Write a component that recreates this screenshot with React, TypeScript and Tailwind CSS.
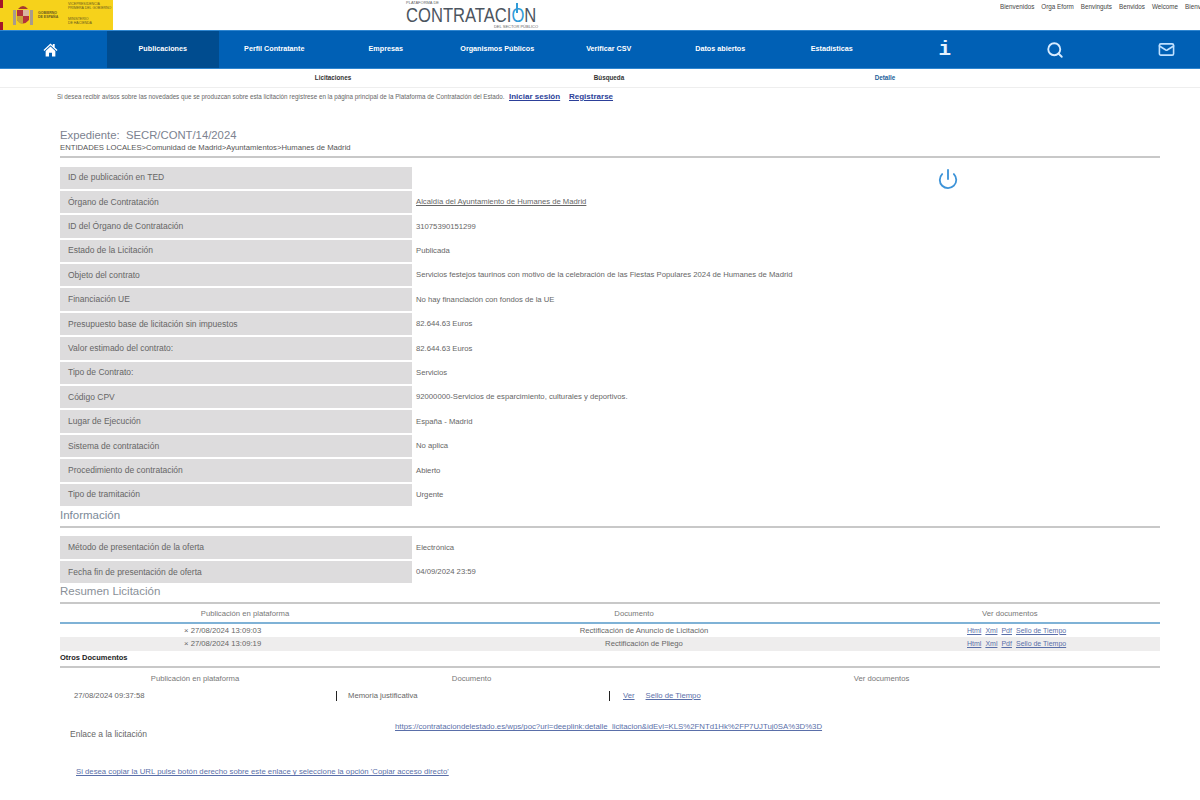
import { Mail, Power, Search } from 'lucide-react';

const font = { fontFamily: '"Liberation Sans", Arial, sans-serif' };

const navItems = ['Publicaciones', 'Perfil Contratante', 'Empresas', 'Organismos Públicos', 'Verificar CSV', 'Datos abiertos', 'Estadísticas'];

const topLinks = ['Bienvenidos', 'Orga Eform', 'Benvinguts', 'Benvidos', 'Welcome', 'Bienvenue'];

const mainRows = [
  ['ID de publicación en TED', ''],
  ['Órgano de Contratación', 'Alcaldía del Ayuntamiento de Humanes de Madrid'],
  ['ID del Órgano de Contratación', '31075390151299'],
  ['Estado de la Licitación', 'Publicada'],
  ['Objeto del contrato', 'Servicios festejos taurinos con motivo de la celebración de las Fiestas Populares 2024 de Humanes de Madrid'],
  ['Financiación UE', 'No hay financiación con fondos de la UE'],
  ['Presupuesto base de licitación sin impuestos', '82.644.63 Euros'],
  ['Valor estimado del contrato:', '82.644.63 Euros'],
  ['Tipo de Contrato:', 'Servicios'],
  ['Código CPV', '92000000-Servicios de esparcimiento, culturales y deportivos.'],
  ['Lugar de Ejecución', 'España - Madrid'],
  ['Sistema de contratación', 'No aplica'],
  ['Procedimiento de contratación', 'Abierto'],
  ['Tipo de tramitación', 'Urgente'],
];

const infoRows = [
  ['Método de presentación de la oferta', 'Electrónica'],
  ['Fecha fin de presentación de oferta', '04/09/2024 23:59'],
];

function DetailRow({ label, value }: { label: string; value: string }) {
  return (
    <div className="flex h-[24.4px] items-stretch">
      <div className="flex w-[352px] items-center border-b-2 border-white bg-[#dddcdd] pl-[8px] text-[8.5px] text-[#666]">{label}</div>
      <div className="flex items-center pb-[2px] pl-[4px] text-[7.7px] text-[#666]">
        {label === 'Órgano de Contratación' ? <span className="underline">{value}</span> : value}
      </div>
    </div>
  );
}

function Logo() {
  return (
    <div className="flex h-[30px] w-[113px] bg-[#f6d21b]">
      <div className="flex w-[3px] flex-col">
        <div className="h-[8px] bg-[#a5142a]" />
        <div className="h-[14px] bg-[#f6d21b]" />
        <div className="h-[8px] bg-[#a5142a]" />
      </div>
      <svg width="22" height="30" viewBox="0 0 22 30" className="ml-[9px]">
        <rect x="1" y="10" width="3" height="15" fill="#a89a8c" />
        <rect x="18" y="10" width="3" height="15" fill="#a89a8c" />
        <path d="M5 10h12v10q-6 7-12 0z" fill="#b4333a" />
        <path d="M11 10h6v6h-6z" fill="#d9b5a0" />
        <path d="M5 16h6v8q-4 0-6-4z" fill="#c9a23a" />
        <path d="M6 9q5-6 10 0z" fill="#a63a30" />
      </svg>
      <div className="ml-[4px] mt-[11px] w-[27px] text-[3.5px] font-bold leading-[4px] text-[#6a5a20]">
        <div>GOBIERNO</div>
        <div>DE ESPAÑA</div>
      </div>
      <div className="ml-[3px] mt-[3px] whitespace-nowrap text-[3.5px] leading-[3.5px] text-[#6a5a20]">
        <div>VICEPRESIDENCIA</div>
        <div>PRIMERA DEL GOBIERNO</div>
        <div className="mt-[8px]">MINISTERIO</div>
        <div>DE HACIENDA</div>
      </div>
    </div>
  );
}

function Brand() {
  return (
    <div className="relative ml-[293px] h-[30px] w-[132px]">
      <div className="absolute left-0 top-0 text-[4px] leading-[5px] text-[#666]">PLATAFORMA DE</div>
      <div className="absolute left-0 top-[3px] origin-left scale-x-[0.83] whitespace-nowrap text-[20px] leading-[24px] text-[#4c5560]">
        CONTRATACI<span className="text-[#2f9bd8]">O</span>N
      </div>
      <div className="absolute left-[110px] top-[3px] h-[10px] w-[1.5px] bg-[#2f9bd8]" />
      <div className="absolute right-0 top-[24px] text-[4px] leading-[5px] text-[#666]">DEL SECTOR PÚBLICO</div>
    </div>
  );
}

function App() {
  return (
    <div style={font} className="min-h-[800px] bg-white">
      <header className="flex h-[30px] bg-white">
        <Logo />
        <Brand />
        <div className="ml-auto flex w-[200px] gap-[7px] overflow-hidden whitespace-nowrap pt-[2px] text-[6.3px] text-[#444]">
          {topLinks.map(link => (
            <span key={link}>{link}</span>
          ))}
        </div>
      </header>

      <nav className="flex h-[39px] items-stretch overflow-hidden border-y border-[#2f86d0] bg-[#0060b5] text-white">
        <div className="flex w-[107px] shrink-0 items-center justify-center pr-[6px]">
          <svg width="15" height="14" viewBox="0 0 16 15" fill="white">
            <path d="M8 0.5 0.5 7.5 1.5 8.5 8 2.5 14.5 8.5 15.5 7.5 12.5 4.7V1h-2v1.9z" />
            <path d="M2.8 8.6 8 3.8l5.2 4.8V14.5H9.6v-4H6.4v4H2.8z" />
          </svg>
        </div>
        {navItems.map((item, index) => (
          <div
            key={item}
            className={`flex w-[111.5px] shrink-0 items-center justify-center text-[7.2px] font-semibold ${index === 0 ? 'bg-[#004c8f]' : ''}`}
          >
            {item}
          </div>
        ))}
        <div className="flex w-[111.5px] shrink-0 items-center justify-center pl-[3px] font-['Liberation_Mono'] text-[21px] font-bold text-[#e6f3ff]">i</div>
        <div className="flex w-[111.5px] shrink-0 items-center justify-center text-[#d6ebff]">
          <Search size={18} strokeWidth={2.5} />
        </div>
        <div className="flex w-[111.5px] shrink-0 items-center justify-center text-[#bfe0ff]">
          <Mail size={17} strokeWidth={2.25} />
        </div>
      </nav>

      <div className="flex h-[19px] items-center border-b border-[#eeeeee] pl-[195px] text-[6.3px] font-semibold text-[#333]">
        <div className="w-[276px] text-center">Licitaciones</div>
        <div className="w-[276px] text-center">Búsqueda</div>
        <div className="w-[276px] text-center text-[#1c5f99]">Detalle</div>
      </div>

      <div className="flex h-[17px] items-center pl-[57px] text-[6.27px] text-[#666]">
        <span className="w-[452px] whitespace-nowrap">Si desea recibir avisos sobre las novedades que se produzcan sobre esta licitación regístrese en la página principal de la Plataforma de Contratación del Estado.</span>
        <a className="w-[60px] text-[8px] font-semibold text-[#2c3f99] underline">Iniciar sesión</a>
        <a className="text-[8px] font-semibold text-[#2c3f99] underline">Registrarse</a>
      </div>

      <main className="pl-[60px] pr-[40px] pt-[23px]">
        <div className="border-b-2 border-[#c8c8c8] pb-[3px]">
          <div className="text-[11.3px] leading-[15px] text-[#7c8290]">Expediente:&nbsp; SECR/CONT/14/2024</div>
          <div className="text-[7.7px] leading-[10px] text-[#555]">ENTIDADES LOCALES&gt;Comunidad de Madrid&gt;Ayuntamientos&gt;Humanes de Madrid</div>
        </div>

        <div className="relative mt-[8.5px]">
          {mainRows.map(([label, value]) => (
            <DetailRow key={label} label={label} value={value} />
          ))}
          <Power size={22} strokeWidth={2} className="absolute left-[877px] top-[1px] text-[#3d93d8]" />
        </div>

        <div className="mt-[0.5px] border-b-2 border-[#c8c8c8] pb-[3px] text-[11.5px] leading-[15px] text-[#7c8a98]">Información</div>
        <div className="mt-[8px]">
          {infoRows.map(([label, value]) => (
            <DetailRow key={label} label={label} value={value} />
          ))}
        </div>

        <div className="-mt-[1px] border-b-2 border-[#c8c8c8] pb-[3px] text-[11.5px] leading-[15px] text-[#8a9098]">Resumen Licitación</div>
        <div className="grid h-[20px] grid-cols-[370px_408px_322px] items-center border-b-2 border-[#7fb2d6] pt-[2px] text-[7.7px] text-[#777]">
          <div className="text-center">Publicación en plataforma</div>
          <div className="text-center">Documento</div>
          <div className="pl-[144px]">Ver documentos</div>
        </div>
        <div className="grid h-[13px] grid-cols-[370px_428px_302px] items-center text-[7.7px] text-[#666]">
          <div className="pl-[124px]">× 27/08/2024 13:09:03</div>
          <div className="text-center">Rectificación de Anuncio de Licitación</div>
          <div className="flex gap-[4px] pl-[109px] text-[7px] text-[#5a6fa9] underline">
            <span>Html</span><span>Xml</span><span>Pdf</span><span>Sello de Tiempo</span>
          </div>
        </div>
        <div className="grid h-[14px] grid-cols-[370px_428px_302px] items-center bg-[#eeeded] text-[7.7px] text-[#666]">
          <div className="pl-[124px]">× 27/08/2024 13:09:19</div>
          <div className="text-center">Rectificación de Pliego</div>
          <div className="flex gap-[4px] pl-[109px] text-[7px] text-[#5a6fa9] underline">
            <span>Html</span><span>Xml</span><span>Pdf</span><span>Sello de Tiempo</span>
          </div>
        </div>

        <div className="border-b-2 border-[#c8c8c8] pb-[3px] pt-[1px] text-[7.5px] font-bold leading-[11px] text-[#222]">Otros Documentos</div>
        <div className="grid h-[22px] grid-cols-[276px_273px_551px] items-center text-[7.7px] text-[#777]">
          <div className="pr-[6px] text-center">Publicación en plataforma</div>
          <div className="pr-[2px] text-center">Documento</div>
          <div className="pr-[6px] text-center">Ver documentos</div>
        </div>
        <div className="grid h-[11px] grid-cols-[276px_273px_551px] items-center text-[7.7px] text-[#666]">
          <div className="pl-[14px]">27/08/2024 09:37:58</div>
          <div className="h-[10px] border-l border-[#222] pl-[11px] leading-[10px]">Memoria justificativa</div>
          <div className="flex h-[10px] gap-[11px] border-l border-[#222] pl-[13px] leading-[10px] text-[#5a6fa9] underline">
            <span>Ver</span><span>Sello de Tiempo</span>
          </div>
        </div>

        <div className="flex h-[47px] pl-[10px] pt-[21px] text-[8.5px] text-[#666]">
          <div className="w-[325px] pt-[6px]">Enlace a la licitación</div>
          <a className="text-[7.8px] leading-[10px] text-[#5a6fa9] underline">https://contrataciondelestado.es/wps/poc?uri=deeplink:detalle_licitacion&amp;idEvl=KLS%2FNTd1Hk%2FP7UJTuj0SA%3D%3D</a>
        </div>
        <a className="ml-[16px] mt-[18px] block text-[7.75px] text-[#5a6fa9] underline">Si desea copiar la URL pulse botón derecho sobre este enlace y seleccione la opción 'Copiar acceso directo'</a>
      </main>
    </div>
  );
}

export default App;
